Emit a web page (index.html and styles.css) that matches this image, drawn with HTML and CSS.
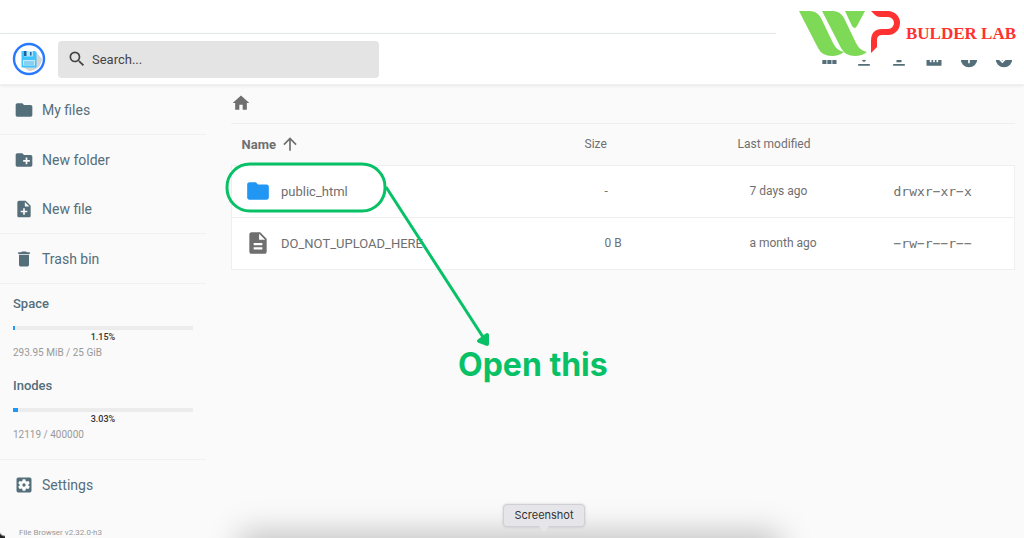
FILE: index.html
```html
<!DOCTYPE html>
<html lang="en">
<head>
    <meta charset="UTF-8">
    <meta name="viewport" content="width=device-width, initial-scale=1.0">
    <title>File Browser</title>
    <link rel="stylesheet" href="styles.css">
</head>
<body>
    <div class="top-strip"></div>

    <header class="header">
        <svg class="logo" viewBox="0 0 34 34">
            <circle cx="17" cy="17" r="15" fill="#fff" stroke="#2979ff" stroke-width="2.4"/>
            <path d="M24 10l6 7a13 13 0 0 1-13 12l-6-4z" fill="#d5d5d5"/>
            <path d="M9.500 9h13.500l1.500 1.500v15h-15z" fill="#40c4ff"/>
            <path d="M12 9h9v5.500h-9z" fill="#b3e5fc"/>
            <path d="M12 9h2.500v5h-2.500zM18 10h1.500v3.500h-1.500z" fill="#1565a0"/>
            <path d="M11 18h12v5.500h-12z" fill="#c5ecfb"/>
            <path d="M12 20h10M12 22h10" stroke="#4fb3e8"/>
        </svg>
        <label class="search">
            <svg class="icon" viewBox="0 0 24 24"><path d="M15.500 14h-.79l-.28-.27A6.470 6.470 0 0 0 16 9.500 6.500 6.500 0 1 0 9.500 16c1.610 0 3.090-.59 4.230-1.570l.27.28v.79l5 4.990L20.490 19l-4.990-5zm-6 0C7.010 14 5 11.990 5 9.500S7.010 5 9.500 5 14 7.010 14 9.500 11.990 14 9.500 14z"/></svg>
            <input type="text" placeholder="Search..." aria-label="Search">
        </label>
        <div class="actions">
            <button aria-label="Switch view"><svg class="icon" viewBox="0 0 24 24"><path d="M4 11h5V5H4v6zm0 7h5v-6H4v6zm6 0h5v-6h-5v6zm6 0h5v-6h-5v6zm-6-7h5V5h-5v6zm6-6v6h5V5h-5z"/></svg></button>
            <button aria-label="Download"><svg class="icon" viewBox="0 0 24 24"><path d="M19 9h-4V3H9v6H5l7 7 7-7zM5 18v2h14v-2H5z"/></svg></button>
            <button aria-label="Upload"><svg class="icon" viewBox="0 0 24 24"><path d="M9 16h6v-6h4l-7-7-7 7h4zm-4 2h14v2H5z"/></svg></button>
            <button aria-label="Usage"><svg class="icon" viewBox="0 0 24 24"><path d="M3 4h18v16H3zM7 10v6h2v-6zm4 0v6h2v-6zm4 0v6h2v-6z" fill-rule="evenodd"/></svg></button>
            <button aria-label="Info"><svg class="icon" viewBox="0 0 24 24"><path d="M12 2a10 10 0 1 0 0 20 10 10 0 0 0 0-20zm1 15h-2v-6h2v6zm0-8h-2V7h2v2z"/></svg></button>
            <button aria-label="Select multiple"><svg class="icon" viewBox="0 0 24 24"><path d="M12 2a10 10 0 1 0 0 20 10 10 0 0 0 0-20zm-2 15l-5-5 1.410-1.410L10 14.170l7.590-7.590L19 8l-9 9z"/></svg></button>
        </div>
    </header>

    <div class="brand">
        <svg class="brand-mark" viewBox="0 0 104 46">
            <g fill="#7ed957">
                <path d="M1 0h11q7 0 11 7l12 25q4 8 11 9q-5 4-12 4q-10 0-14-8z"/>
                <path d="M24 0h11q7 0 11 7l12 25q4 8 11 9q-5 4-12 4q-10 0-14-8z"/>
                <path d="M47 0h20l-8 15q-2 4-5 0z"/>
            </g>
            <path d="M73 0h17a12 12 0 0 1 0 24h-6q-5 0-5 5v7l-6 6v-12q0-12 11-12h6a6 6 0 0 0 0-12h-8q-3 0-5-2z" fill="#ff3131"/>
        </svg>
        <span class="brand-name">BULDER LAB</span>
    </div>

    <div class="layout">
        <nav class="sidebar">
            <div class="group">
                <button class="item"><svg class="icon" viewBox="0 0 24 24"><path d="M10 4H4c-1.100 0-2 .9-2 2v12c0 1.100.9 2 2 2h16c1.100 0 2-.9 2-2V8c0-1.100-.9-2-2-2h-8l-2-2z"/></svg>My files</button>
            </div>
            <div class="group">
                <button class="item"><svg class="icon" viewBox="0 0 24 24"><path d="M20 6h-8l-2-2H4c-1.110 0-2 .89-2 2v12c0 1.110.89 2 2 2h16c1.110 0 2-.89 2-2V8c0-1.110-.89-2-2-2zm-1 8h-3v3h-2v-3h-3v-2h3V9h2v3h3v2z"/></svg>New folder</button>
                <button class="item"><svg class="icon" viewBox="0 0 24 24"><path d="M14 2H6c-1.100 0-2 .9-2 2v16c0 1.100.89 2 1.990 2H18c1.100 0 2-.9 2-2V8l-6-6zm2 14h-3v3h-2v-3H8v-2h3v-3h2v3h3v2zm-3-7V3.500L18.500 9H13z"/></svg>New file</button>
            </div>
            <div class="group">
                <button class="item"><svg class="icon" viewBox="0 0 24 24"><path d="M6 19c0 1.100.9 2 2 2h8c1.100 0 2-.9 2-2V7H6v12zM19 4h-3.500l-1-1h-5l-1 1H5v2h14V4z"/></svg>Trash bin</button>
            </div>
            <div class="group usage">
                <h2>Space</h2>
                <div class="bar"><div class="bar-fill" style="width: 1.15%"></div></div>
                <div class="percent">1.15%</div>
                <div class="amount">293.95 MiB / 25 GiB</div>
                <h2>Inodes</h2>
                <div class="bar"><div class="bar-fill" style="width: 3.03%"></div></div>
                <div class="percent">3.03%</div>
                <div class="amount">12119 / 400000</div>
            </div>
            <div class="group">
                <button class="item"><svg class="icon" viewBox="0 0 24 24"><path d="M12 10a2 2 0 1 0 0 4 2 2 0 0 0 0-4zm7-7H5a2 2 0 0 0-2 2v14a2 2 0 0 0 2 2h14a2 2 0 0 0 2-2V5a2 2 0 0 0-2-2zm-1.750 9c0 .23-.02.46-.05.68l1.480 1.160c.13.11.17.3.08.45l-1.400 2.420c-.09.15-.27.21-.43.15l-1.740-.7c-.36.28-.76.51-1.180.69l-.26 1.850c-.03.17-.18.3-.35.3h-2.800c-.17 0-.32-.13-.35-.29l-.26-1.850c-.43-.18-.82-.41-1.180-.69l-1.740.7c-.16.06-.34 0-.43-.15l-1.400-2.420c-.09-.15-.05-.34.08-.45l1.480-1.160a5.500 5.500 0 0 1 0-1.370l-1.480-1.160c-.13-.11-.17-.3-.08-.45l1.400-2.420c.09-.15.27-.21.43-.15l1.740.7c.36-.28.76-.51 1.180-.69l.26-1.850c.03-.17.18-.3.35-.3h2.800c.17 0 .32.13.35.29l.26 1.850c.43.18.82.41 1.180.69l1.740-.7c.16-.06.34 0 .43.15l1.400 2.420c.09.15.05.34-.08.45l-1.480 1.160c.03.23.05.46.05.69z"/></svg>Settings</button>
            </div>
            <p class="version">File Browser v2.32.0-h3</p>
        </nav>

        <main class="content">
            <div class="breadcrumbs">
                <a href="#" aria-label="Home"><svg class="icon" viewBox="0 0 24 24"><path d="M10 20v-6h4v6h5v-8h3L12 3 2 12h3v8z"/></svg></a>
            </div>
            <table class="listing">
                <thead>
                    <tr>
                        <th class="col-name"><span class="sorted">Name <svg class="icon" viewBox="0 0 24 24"><path d="M4 12l1.410 1.410L11 7.830V20h2V7.830l5.580 5.590L20 12l-8-8-8 8z"/></svg></span></th>
                        <th class="col-size">Size</th>
                        <th class="col-date">Last modified</th>
                        <th class="col-mode"></th>
                    </tr>
                </thead>
                <tbody>
                    <tr>
                        <td><span class="file"><svg class="icon folder" viewBox="0 0 24 24"><path d="M10 4H4c-1.100 0-2 .9-2 2v12c0 1.100.9 2 2 2h16c1.100 0 2-.9 2-2V8c0-1.100-.9-2-2-2h-8l-2-2z"/></svg>public_html</span></td>
                        <td class="size">-</td>
                        <td class="date">7 days ago</td>
                        <td class="mode">drwxr−xr−x</td>
                    </tr>
                    <tr>
                        <td><span class="file"><svg class="icon" viewBox="0 0 24 24"><path d="M14 2H6c-1.100 0-2 .9-2 2v16c0 1.100.89 2 1.990 2H18c1.100 0 2-.9 2-2V8l-6-6zm2 16H8v-2h8v2zm0-4H8v-2h8v2zm-3-5V3.500L18.500 9H13z"/></svg>DO_NOT_UPLOAD_HERE</span></td>
                        <td class="size">0 B</td>
                        <td class="date">a month ago</td>
                        <td class="mode">−rw−r−−r−−</td>
                    </tr>
                </tbody>
            </table>

            <!-- callout drawn over the listing -->
            <svg class="callout" width="290" height="190" viewBox="0 0 290 190">
                <rect x="2" y="2" width="158" height="47" rx="23" fill="none" stroke="#08c167" stroke-width="3"/>
                <path d="M161 25L258 175" stroke="#08c167" stroke-width="3"/>
                <path d="M254 179l8-6v9z" fill="#08c167" stroke="#08c167" stroke-width="4" stroke-linejoin="round"/>
            </svg>
            <div class="callout-text">Open this</div>
        </main>
    </div>

    <div class="dock-shadow"></div>
    <div class="tooltip">Screenshot</div>
    <div class="corner"></div>
</body>
</html>
```

FILE: styles.css
```css
* {
    box-sizing: border-box;
}
body {
    margin: 0;
    height: 100vh;
    overflow: hidden;
    position: relative;
    background: #fafafa;
    color: #6f6f6f;
    font-family: Roboto, sans-serif;
    font-size: 13px;
}
button {
    border: 0;
    padding: 0;
    background: none;
    color: inherit;
    font: inherit;
    cursor: pointer;
}
.icon {
    display: block;
    width: 20px;
    height: 20px;
    fill: currentColor;
    flex: none;
}
.top-strip {
    height: 34px;
    background: #fff;
    border-bottom: 1px solid #e3ebeb;
}
.header {
    display: flex;
    align-items: center;
    height: 51px;
    padding: 0 10px 0 12px;
    background: #fff;
    border-bottom: 1px solid #f0f0f0;
    box-shadow: 0 1px 3px rgba(0,0,0,0.08);
}
.logo {
    width: 34px;
    height: 34px;
    margin-right: 12px;
}
.search {
    display: flex;
    align-items: center;
    gap: 5px;
    flex: 0 1 321px;
    height: 37px;
    padding: 0 9px;
    border-radius: 4px;
    background: #e4e4e4;
    color: #444;
}
.search input {
    flex: 1;
    min-width: 0;
    border: 0;
    padding: 0;
    outline: 0;
    background: none;
    font: inherit;
}
.search input::placeholder {
    color: #444;
    opacity: 1;
}
.actions {
    display: flex;
    gap: 15px;
    margin-left: auto;
    color: #546e7a;
}
.brand {
    position: absolute;
    top: 0;
    right: 0;
    display: flex;
    width: 248px;
    height: 60px;
    padding: 11px 4px 0 22px;
    background: #fff;
}
.brand-mark {
    flex: none;
    width: 104px;
    height: 46px;
}
.brand-name {
    padding-top: 12px;
    margin-left: 4px;
    color: #ff3131;
    font-family: "Liberation Serif", serif;
    font-size: 17px;
    font-weight: bold;
    line-height: 22px;
    white-space: nowrap;
}
.layout {
    display: flex;
}
.sidebar {
    flex: 0 0 206px;
    color: #546e7a;
}
.group {
    border-bottom: 1px solid #f0f0f0;
}
.usage + .group {
    border-bottom: 0;
}
.item {
    display: flex;
    align-items: center;
    gap: 8px;
    width: 100%;
    height: 49px;
    padding-left: 14px;
    font-size: 14px;
}
.usage {
    padding: 11px 13px 0;
}
.usage h2 {
    margin: 0;
    font-size: 13px;
    font-weight: 500;
    line-height: 18px;
}
.bar {
    height: 4px;
    margin-top: 13px;
    background: #ececec;
}
.bar-fill {
    height: 100%;
    background: #2196f3;
}
.percent {
    height: 15px;
    color: #333;
    font-size: 9px;
    font-weight: 500;
    line-height: 14px;
    text-align: center;
}
.amount {
    margin-bottom: 16px;
    color: #999;
    font-size: 10px;
    line-height: 16px;
}
.version {
    margin: 19px 19px 0;
    color: #999;
    font-size: 8px;
    line-height: 10px;
}
.content {
    position: relative;
    flex: 1;
    padding: 0 9px 0 25px;
}
.breadcrumbs {
    height: 39px;
    padding-top: 8px;
    border-bottom: 1px solid #efefef;
}
.breadcrumbs a {
    display: inline-block;
    color: #6f6f6f;
}
.listing {
    width: 100%;
    table-layout: fixed;
    border-collapse: collapse;
    text-align: left;
}
.listing th {
    height: 41px;
    padding: 0;
    font-size: 12px;
    font-weight: 400;
}
.listing td {
    height: 52px;
    padding: 0;
    border-top: 1px solid #efefef;
    border-bottom: 1px solid #efefef;
}
.listing tbody tr {
    background: #fff;
    border: 1px solid #efefef;
}
.listing .col-size {
    width: 153px;
}
.listing .col-date {
    width: 156px;
}
.listing .col-mode {
    width: 121px;
}
.sorted {
    display: flex;
    align-items: center;
    gap: 4px;
    padding-left: 10px;
    font-size: 13px;
    font-weight: 700;
}
.file {
    display: flex;
    align-items: center;
    gap: 10px;
    padding-left: 13px;
}
.file .icon {
    width: 26px;
    height: 26px;
}
.file .folder {
    color: #2196f3;
}
.listing .size {
    padding-left: 20px;
    font-size: 12px;
}
.listing .date {
    padding-left: 12px;
    font-size: 12px;
}
.listing .mode {
    font-family: "DejaVu Sans Mono", monospace;
}
.callout {
    position: absolute;
    top: 77px;
    left: 19px;
}
.callout-text {
    position: absolute;
    top: 260px;
    left: 252px;
    color: #08c167;
    font-family: Inter, sans-serif;
    font-size: 32px;
    font-weight: 700;
    line-height: 40px;
}
.dock-shadow {
    position: absolute;
    bottom: -24px;
    left: 244px;
    width: 532px;
    height: 24px;
    box-shadow: 0 0 32px 4px rgba(0,0,0,0.25);
}
.tooltip {
    position: absolute;
    bottom: 11px;
    left: 503px;
    width: 82px;
    height: 23px;
    border: 1px solid #d0d0d4;
    border-radius: 4px;
    background: #e6e6ea;
    color: #333;
    font-family: Inter, sans-serif;
    font-size: 11px;
    line-height: 21px;
    text-align: center;
    box-shadow: 0 0 3px rgba(0,0,0,0.15);
}
.tooltip::after {
    content: "";
    position: absolute;
    top: 21px;
    left: 35px;
    border: 5px solid transparent;
    border-top: 7px solid #e6e6ea;
    border-bottom: 0;
}
.corner {
    position: absolute;
    bottom: 0;
    left: 0;
    width: 5px;
    height: 8px;
    background: radial-gradient(circle at 100% 0, transparent 5px, #222 7px);
}
```
